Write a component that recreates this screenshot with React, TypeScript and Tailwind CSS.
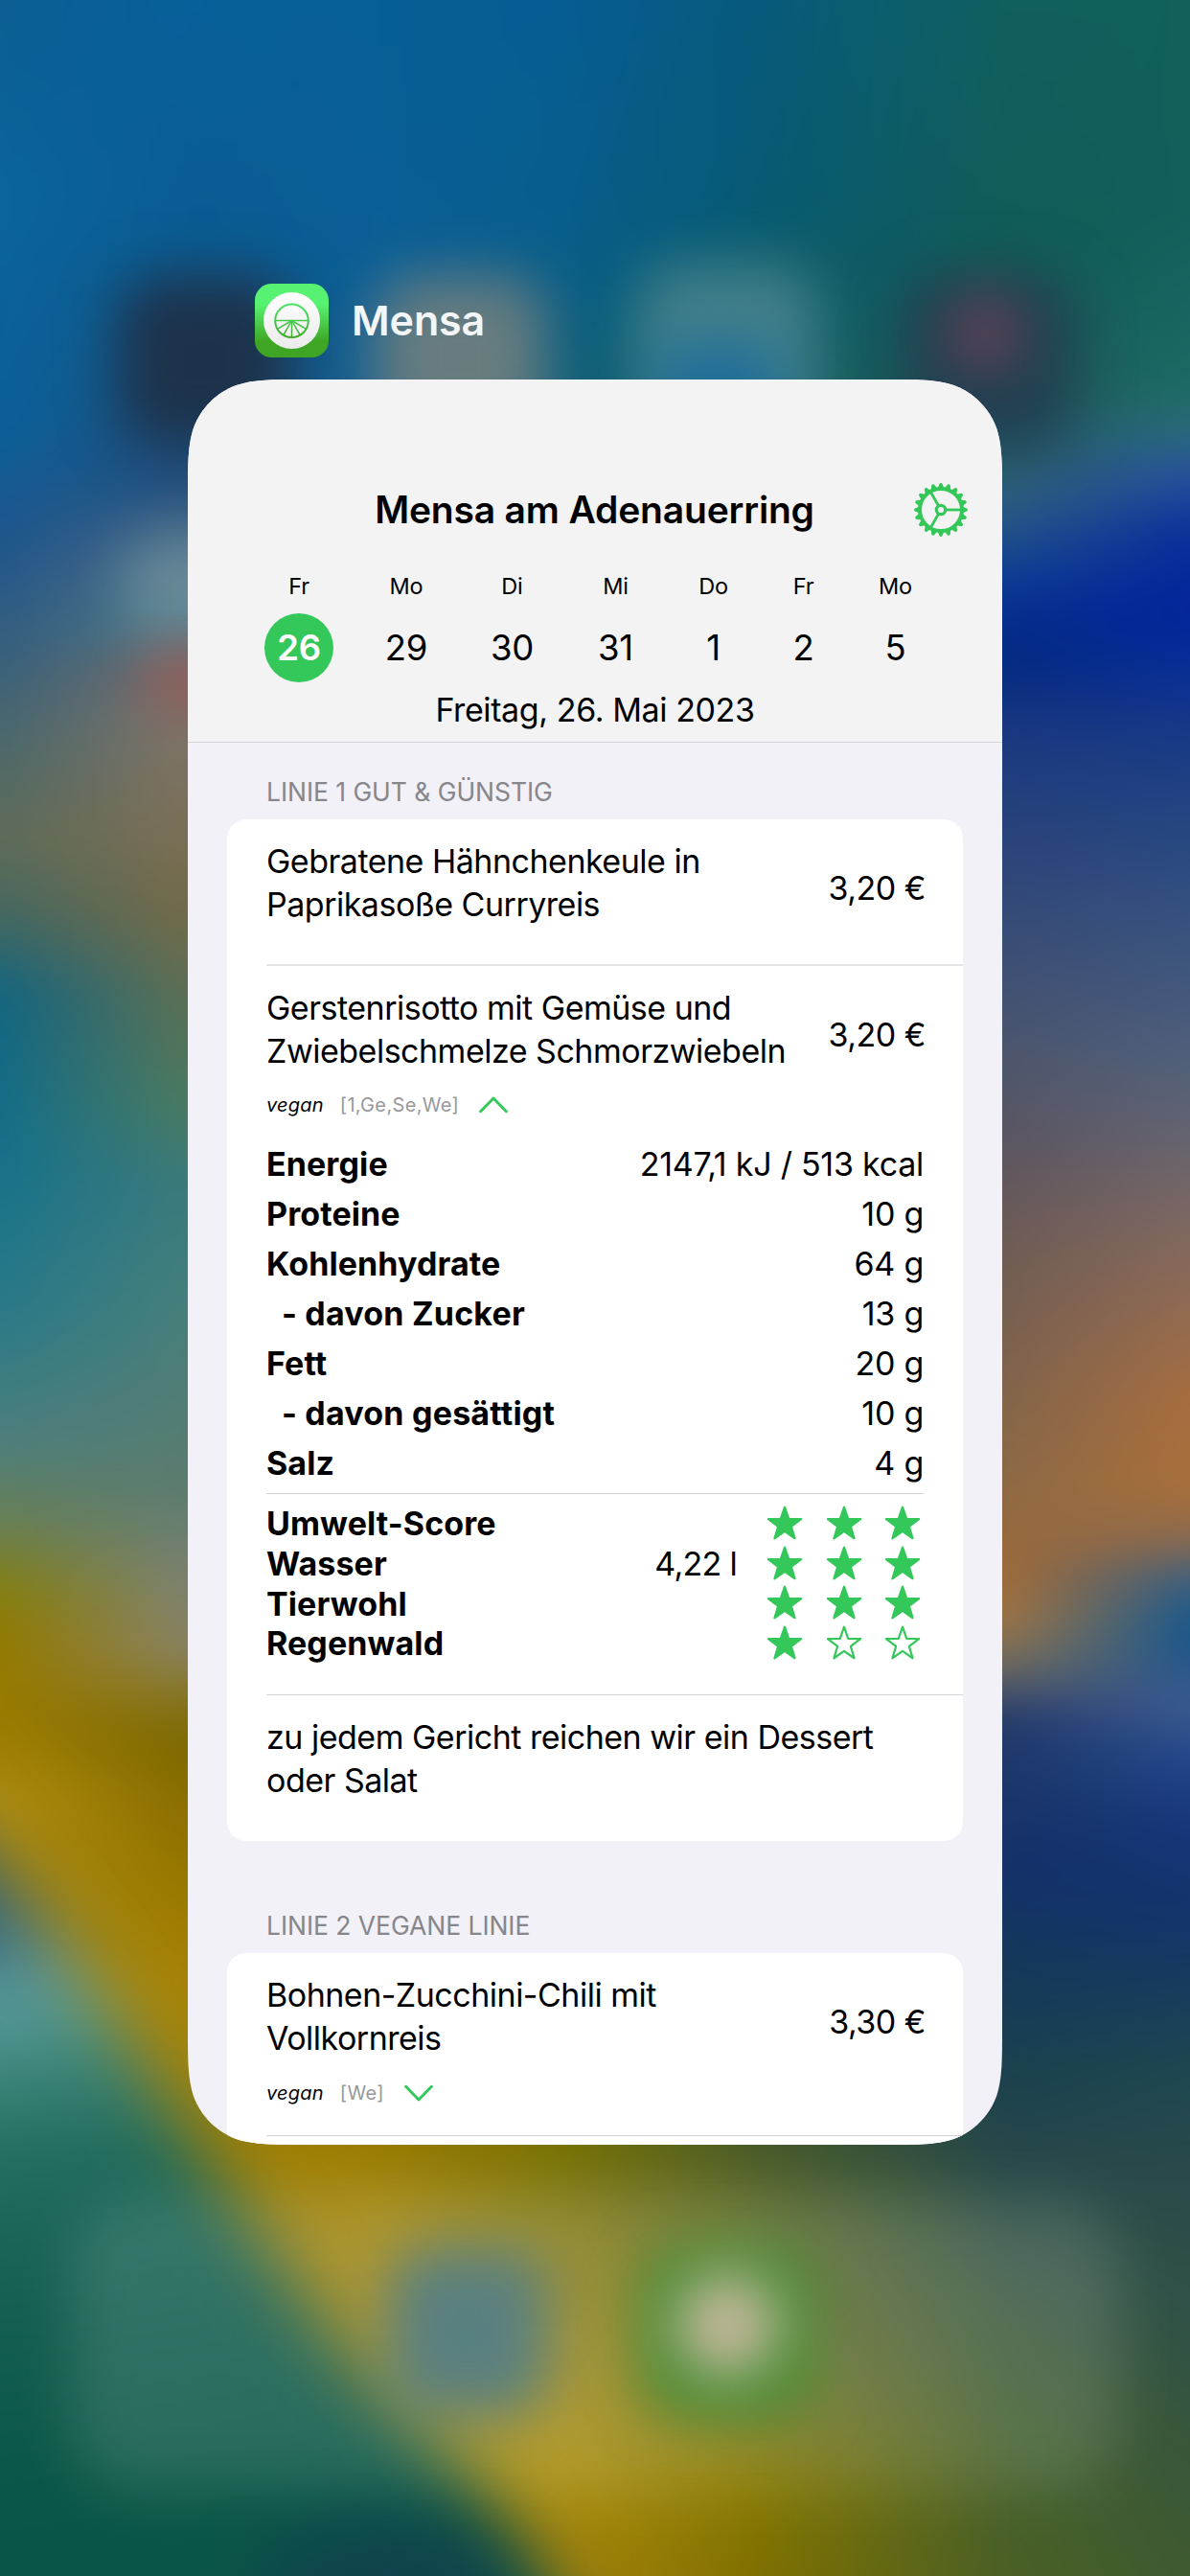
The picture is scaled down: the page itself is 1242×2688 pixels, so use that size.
import type { ReactNode } from 'react';

const GREEN = '#34c759';

/* ---------- Wallpaper ---------- */

type Stop = [number, string];

const COLUMNS: { x: number; stops: Stop[] }[] = [
  {
    x: 0,
    stops: [
      [0, '#0b5f93'], [120, '#0b659b'], [260, '#0a5f98'], [330, '#1f558c'], [400, '#37607c'], [450, '#4a686c'],
      [510, '#5f6c58'], [555, '#456860'], [605, '#126580'], [700, '#15708a'], [800, '#2a7a88'], [880, '#4f7f7c'],
      [930, '#6a7f50'], [968, '#857f10'], [1000, '#937a00'], [1050, '#9a7a00'], [1095, '#b08c10'], [1200, '#a88c18'],
      [1568, '#a88c18'],
    ],
  },
  {
    x: 113,
    stops: [
      [0, '#08609a'], [150, '#0a5c92'], [290, '#23507f'], [344, '#4f6d85'], [379, '#4f7a85'], [412, '#746e6c'],
      [443, '#807468'], [496, '#7d7059'], [554, '#756a48'], [613, '#5a7055'], [671, '#4a7a60'], [724, '#3a7a7d'],
      [788, '#457f7c'], [905, '#5b7c70'], [960, '#7b8272'], [1005, '#8a8260'], [1035, '#857420'], [1060, '#7c6800'],
      [1110, '#8f7000'], [1160, '#9c7a00'], [1210, '#a88408'], [1568, '#a5850a'],
    ],
  },
  {
    x: 240,
    stops: [[0, '#065f94'], [200, '#0c5f96'], [1300, '#967800'], [1340, '#a08612'], [1450, '#a48d1c'], [1568, '#a5870c']],
  },
  {
    x: 345,
    stops: [[0, '#065d93'], [150, '#085e8a'], [240, '#0f5f78'], [1300, '#757000'], [1340, '#807a18'], [1430, '#9a881c'], [1500, '#a88e10'], [1568, '#a5820c']],
  },
  {
    x: 460,
    stops: [[0, '#085a7c'], [120, '#085a74'], [240, '#105f60'], [1300, '#455828'], [1350, '#5f6c2c'], [1450, '#757628'], [1510, '#857800'], [1568, '#7f7000']],
  },
  {
    x: 611,
    stops: [
      [0, '#10605f'], [150, '#115c58'], [230, '#1c5a5a'], [286, '#2a6070'], [303, '#305f80'], [327, '#1f4f8a'],
      [355, '#0d3a95'], [379, '#052b8a'], [409, '#052b80'], [443, '#1a3780'], [496, '#26417c'], [584, '#3d4f75'],
      [642, '#4d566d'], [700, '#5d5660'], [759, '#6f5c55'], [905, '#8f6a45'], [957, '#a06a38'], [986, '#a07545'],
      [1016, '#6a6a60'], [1033, '#404a6a'], [1050, '#203a6a'], [1138, '#14306a'], [1197, '#15385a'], [1255, '#1a4050'],
      [1313, '#26484a'], [1400, '#3c5a42'], [1480, '#45602e'], [1568, '#4a6024'],
    ],
  },
  {
    x: 725,
    stops: [
      [0, '#11605a'], [130, '#11605a'], [235, '#1c6a64'], [262, '#2a6a78'], [286, '#2a549c'], [325, '#0a2f9a'],
      [370, '#03249a'], [400, '#062d98'], [450, '#183a84'], [550, '#33507f'], [650, '#52607a'], [750, '#806860'],
      [850, '#a66d40'], [905, '#a86f3a'], [938, '#8a6a50'], [962, '#3a5f80'], [990, '#16588c'], [1012, '#25568c'],
      [1040, '#3d5a90'], [1070, '#24478a'], [1110, '#163678'], [1160, '#14336e'], [1200, '#163a60'], [1260, '#1f4650'],
      [1320, '#284a4a'], [1400, '#2f5148'], [1500, '#38573a'], [1568, '#3f5a30'],
    ],
  },
];

function Wallpaper() {
  return (
    <svg className="absolute inset-0 h-full w-full" viewBox="0 0 725 1568" preserveAspectRatio="none" aria-hidden="true">
      <defs>
        {COLUMNS.map((c, i) => (
          <linearGradient key={c.x} id={`col${i}`} gradientUnits="userSpaceOnUse" x1="0" y1="0" x2="0" y2="1568">
            {c.stops.map(([y, color]) => (
              <stop key={y} offset={y / 1568} stopColor={color} />
            ))}
          </linearGradient>
        ))}
        {COLUMNS.slice(1).map((c, i) => (
          <linearGradient key={c.x} id={`ramp${i + 1}`} gradientUnits="userSpaceOnUse" x1={COLUMNS[i].x} y1="0" x2={c.x} y2="0">
            <stop offset="0" stopColor="#fff" stopOpacity="0" />
            <stop offset="1" stopColor="#fff" stopOpacity="1" />
          </linearGradient>
        ))}
        {COLUMNS.slice(1).map((c, i) => (
          <mask key={c.x} id={`mask${i + 1}`} maskUnits="userSpaceOnUse" x="-60" y="-60" width="845" height="1688">
            <rect x="-60" y="-60" width="845" height="1688" fill={`url(#ramp${i + 1})`} />
          </mask>
        ))}
        <linearGradient id="teal" gradientUnits="userSpaceOnUse" x1="0" y1="1140" x2="60" y2="1568">
          <stop offset="0" stopColor="#28586f" />
          <stop offset="0.07" stopColor="#2f6480" />
          <stop offset="0.17" stopColor="#60a0a0" />
          <stop offset="0.26" stopColor="#418a80" />
          <stop offset="0.38" stopColor="#246e60" />
          <stop offset="0.6" stopColor="#145f50" />
          <stop offset="0.85" stopColor="#0b5747" />
          <stop offset="1" stopColor="#0a5646" />
        </linearGradient>
        <filter id="b12" colorInterpolationFilters="sRGB" x="-80%" y="-80%" width="260%" height="260%"><feGaussianBlur stdDeviation="17" /></filter>
        <filter id="b20" colorInterpolationFilters="sRGB" x="-80%" y="-80%" width="260%" height="260%"><feGaussianBlur stdDeviation="22" /></filter>
        <filter id="soft" colorInterpolationFilters="sRGB" filterUnits="userSpaceOnUse" x="-60" y="-60" width="845" height="1688"><feGaussianBlur stdDeviation="10" /></filter>
      </defs>

      <g filter="url(#soft)">
        <rect x="-60" y="-60" width="845" height="1688" fill="url(#col0)" />
        {COLUMNS.slice(1).map((c, i) => (
          <rect key={c.x} x="-60" y="-60" width="845" height="1688" fill={`url(#col${i + 1})`} mask={`url(#mask${i + 1})`} />
        ))}
      </g>

      {/* lower left slope */}
      <path d="M-80 1055 L-20 1120 L35 1180 L92 1265 L150 1350 L212 1435 L282 1505 L350 1600 L350 1680 L-80 1680Z" fill="url(#teal)" filter="url(#b20)" />
      <ellipse cx="235" cy="1580" rx="80" ry="46" fill="#11404f" opacity="0.9" filter="url(#b20)" />

      {/* dock */}
      <rect x="42" y="1338" width="641" height="178" rx="44" fill="#ffffff" opacity="0.12" filter="url(#b12)" />
      <rect x="236" y="1368" width="98" height="102" rx="26" fill="#557f84" opacity="0.95" filter="url(#b12)" />
      <rect x="392" y="1368" width="102" height="102" rx="26" fill="#3f8c30" filter="url(#b12)" />
      <circle cx="443" cy="1415" r="33" fill="#c4b89c" filter="url(#b12)" />

      {/* home screen icons */}
      <rect x="72" y="168" width="106" height="104" rx="26" fill="#1d324a" filter="url(#b12)" />
      <rect x="228" y="168" width="104" height="100" rx="26" fill="#72807e" opacity="0.9" filter="url(#b12)" />
      <rect x="388" y="162" width="110" height="100" rx="26" fill="#4f8890" opacity="0.85" filter="url(#b12)" />
      <rect x="398" y="208" width="80" height="56" rx="20" fill="#186a9c" opacity="0.85" filter="url(#b12)" />
      <rect x="550" y="168" width="104" height="104" rx="26" fill="#213f52" filter="url(#b12)" />
      <circle cx="600" cy="203" r="22" fill="#7a4458" opacity="0.8" filter="url(#b12)" />
      <rect x="76" y="328" width="98" height="58" rx="20" fill="#7394a0" opacity="0.7" filter="url(#b12)" />
      <rect x="86" y="398" width="74" height="30" rx="15" fill="#a05650" opacity="0.85" filter="url(#b12)" />
    </svg>
  );
}

/* ---------- Icons ---------- */

function AppIcon() {
  const spokes = [0, 30, 60, 90, 120, 150, 180];
  return (
    <svg width="77" height="77" viewBox="0 0 77 77" aria-hidden="true">
      <defs>
        <linearGradient id="appBg" x1="0" y1="0" x2="0" y2="1">
          <stop offset="0.28" stopColor="#58f272" />
          <stop offset="0.78" stopColor="#3fa625" />
        </linearGradient>
        <linearGradient id="appDisc" x1="0" y1="0" x2="0" y2="1">
          <stop offset="0" stopColor="#ffffff" />
          <stop offset="1" stopColor="#ebebeb" />
        </linearGradient>
        <linearGradient id="appWheel" gradientUnits="userSpaceOnUse" x1="0" y1="20" x2="0" y2="57">
          <stop offset="0.1" stopColor="#4de26a" />
          <stop offset="1" stopColor="#3fa82a" />
        </linearGradient>
      </defs>
      <rect width="77" height="77" rx="17.5" fill="url(#appBg)" />
      <circle cx="38.5" cy="38.5" r="29.5" fill="url(#appDisc)" />
      <g fill="none" stroke="url(#appWheel)">
        <circle cx="38.5" cy="38.8" r="17.3" strokeWidth="2" />
        {spokes.map((a) => {
          const t = (a * Math.PI) / 180;
          return (
            <path key={a} strokeWidth="1.5" d={`M38.5 38.5L${38.5 + 17 * Math.cos(t)} ${38.6 + 17 * Math.sin(t)}`} />
          );
        })}
      </g>
    </svg>
  );
}

function GearIcon() {
  const teeth = Array.from({ length: 20 }, (_, i) => i * 18);
  return (
    <svg width="58" height="58" viewBox="-29 -29 58 58" fill="none" stroke={GREEN} aria-hidden="true">
      <circle r="22" strokeWidth="4" />
      <circle r="4.7" strokeWidth="3.2" />
      {[0, 120, 240].map((a) => (
        <path key={a} d="M5.5 0H21" strokeWidth="2.8" transform={`rotate(${a})`} />
      ))}
      {teeth.map((a) => (
        <path key={a} d="M23 -2.7L27.4 -0.8V0.8L23 2.7Z" fill={GREEN} strokeWidth="1" strokeLinejoin="round" transform={`rotate(${a})`} />
      ))}
    </svg>
  );
}

function Chevron({ up }: { up?: boolean }) {
  return (
    <svg width="30" height="18" viewBox="0 0 30 18" fill="none" stroke={GREEN} strokeWidth="2.9" strokeLinecap="round" strokeLinejoin="round" aria-hidden="true">
      <path d={up ? 'M1.6 15.8L15 2L28.4 15.8' : 'M1.6 2.2L15 16L28.4 2.2'} />
    </svg>
  );
}

function starPath(outer: number, inner: number) {
  const pts = Array.from({ length: 10 }, (_, i) => {
    const r = i % 2 ? inner : outer;
    const t = (Math.PI / 5) * i - Math.PI / 2;
    return `${(r * Math.cos(t)).toFixed(2)} ${(r * Math.sin(t)).toFixed(2)}`;
  });
  return `M${pts.join('L')}Z`;
}

const STAR = starPath(18, 7.2);

function Star({ filled }: { filled: boolean }) {
  return (
    <svg width="38" height="38" viewBox="-19 -19.7 38 38" aria-hidden="true">
      <path d={STAR} fill={filled ? GREEN : 'none'} stroke={GREEN} strokeWidth="2.2" strokeLinejoin="round" />
    </svg>
  );
}

/* ---------- Header ---------- */

const DAYS = [
  { day: 'Fr', date: '26', gap: '' },
  { day: 'Mo', date: '29', gap: 'ml-10' },
  { day: 'Di', date: '30', gap: 'ml-[38.5px]' },
  { day: 'Mi', date: '31', gap: 'ml-9' },
  { day: 'Do', date: '1', gap: 'ml-[30px]' },
  { day: 'Fr', date: '2', gap: 'ml-[22px]' },
  { day: 'Mo', date: '5', gap: 'ml-6' },
];

function Header() {
  return (
    <header className="h-[379px] border-b border-[#d5d5d8] bg-[#f3f3f3] pt-[107px]">
      <div className="grid h-[58px] grid-cols-[1fr_auto_1fr] items-center pr-[35px]">
        <span />
        <h1 className="translate-x-[17px] text-[39px] font-semibold tracking-[-0.18px]">Mensa am Adenauerring</h1>
        <button className="justify-self-end">
          <GearIcon />
        </button>
      </div>
      <div className="mt-[33px] flex pl-[80px]">
        {DAYS.map((d, i) => (
          <div key={i} className={`flex w-[72px] flex-col items-center ${d.gap}`}>
            <span className="h-9 text-[23.5px] leading-9 tracking-[-0.2px]">{d.day}</span>
            <span
              className={
                i === 0
                  ? 'mt-[10px] h-[72px] w-[72px] rounded-full bg-[#34c759] text-center text-[36.5px] leading-[72px] font-semibold tracking-[-0.2px] text-white'
                  : 'mt-[10px] h-[72px] text-[36.5px] leading-[72px] tracking-[-0.2px]'
              }
            >
              {d.date}
            </span>
          </div>
        ))}
      </div>
      <p className="mt-[6px] text-center leading-[45px] tracking-[-0.4px]">Freitag, 26. Mai 2023</p>
    </header>
  );
}

/* ---------- Menu ---------- */

function Dish({ name, price }: { name: string[]; price: string }) {
  return (
    <div className="flex items-center justify-between">
      <p className="leading-[45px]">
        {name.map((line) => (
          <span key={line} className="block whitespace-nowrap">{line}</span>
        ))}
      </p>
      <span className="mt-[11px] -mr-[2px]">{price}</span>
    </div>
  );
}

function Tags({ additives, open }: { additives: string; open?: boolean }) {
  return (
    <div className="flex h-7 items-center text-[20px]">
      <span className="tracking-[0.2px] italic">vegan</span>
      <span className="ml-[17px] tracking-[0.35px] text-[#98989c]">{additives}</span>
      <span className="ml-[21px]">
        <Chevron up={open} />
      </span>
    </div>
  );
}

const NUTRITION = [
  { label: 'Energie', value: '2147,1 kJ / 513 kcal' },
  { label: 'Proteine', value: '10 g' },
  { label: 'Kohlenhydrate', value: '64 g' },
  { label: '- davon Zucker', value: '13 g', sub: true },
  { label: 'Fett', value: '20 g' },
  { label: '- davon gesättigt', value: '10 g', sub: true },
  { label: 'Salz', value: '4 g' },
];

const SCORES = [
  { label: 'Umwelt-Score', stars: 3 },
  { label: 'Wasser', stars: 3, value: '4,22 l' },
  { label: 'Tierwohl', stars: 3 },
  { label: 'Regenwald', stars: 1 },
];

function SectionTitle({ children }: { children: ReactNode }) {
  return <h2 className="pl-[41px] text-[26.5px] leading-8 tracking-[-0.05px] text-[#86868b]">{children}</h2>;
}

function MenuList() {
  return (
    <main className="px-[41px] pt-[35px]">
      <SectionTitle>LINIE 1 GUT &amp; GÜNSTIG</SectionTitle>
      <section className="mt-[13px] h-[1066px] rounded-[20px] bg-white pl-[41px]">
        <div className="h-[153px] border-b-2 border-[#e4e4e6] pt-[21px] pr-[41px]">
          <Dish name={['Gebratene Hähnchenkeule in', 'Paprikasoße Curryreis']} price="3,20 €" />
        </div>
        <div className="h-[761px] border-b border-[#d3d3d6] pt-[21px]">
          <div className="pr-[41px]">
            <Dish name={['Gerstenrisotto mit Gemüse und', 'Zwiebelschmelze Schmorzwiebeln']} price="3,20 €" />
            <div className="mt-5">
              <Tags additives="[1,Ge,Se,We]" open />
            </div>
            <dl className="mt-[21px]">
              {NUTRITION.map((n) => (
                <div key={n.label} className="flex h-[52px] items-center justify-between">
                  <dt className={n.sub ? 'pl-4 font-bold tracking-[0.2px]' : 'font-bold tracking-[0.1px]'}>{n.label}</dt>
                  <dd className="tracking-[-0.25px]">{n.value}</dd>
                </div>
              ))}
            </dl>
            <div className="mt-[6px] border-t border-[#d3d3d6] pt-[10px]">
              {SCORES.map((s) => (
                <div key={s.label} className="flex h-[41.7px] items-center">
                  <span className="flex-1 font-bold tracking-[0.1px]">{s.label}</span>
                  {s.value && <span className="mr-[31px] tracking-[-0.7px]">{s.value}</span>}
                  <span className="mr-[3px] flex gap-[23.5px]">
                    {[0, 1, 2].map((i) => (
                      <Star key={i} filled={i < s.stars} />
                    ))}
                  </span>
                </div>
              ))}
            </div>
          </div>
        </div>
        <div className="pt-[21px] leading-[45px]">
          <p>zu jedem Gericht reichen wir ein Dessert</p>
          <p>oder Salat</p>
        </div>
      </section>

      <div className="mt-[72px]">
        <SectionTitle>LINIE 2 VEGANE LINIE</SectionTitle>
      </div>
      <section className="mt-[13px] h-[300px] rounded-[20px] bg-white pl-[41px]">
        <div className="h-[191px] border-b border-[#d3d3d6] pt-[21px]">
          <div className="pr-[41px]">
            <Dish name={['Bohnen-Zucchini-Chili mit', 'Vollkornreis']} price="3,30 €" />
            <div className="mt-[21px]">
              <Tags additives="[We]" />
            </div>
          </div>
        </div>
      </section>
    </main>
  );
}

export default function App() {
  return (
    <div className="relative h-[2688px] w-[1242px] overflow-hidden font-['Inter','Liberation_Sans',sans-serif] text-black">
      <Wallpaper />
      <div className="relative pt-[296px] pl-[196px]">
        <div className="flex h-[77px] items-center gap-[24px] pl-[70px]">
          <AppIcon />
          <span className="text-[43px] font-[560] tracking-[-0.1px] text-[#f3f5f7]">Mensa</span>
        </div>
        <div className="mt-[23px] h-[1842px] w-[850px] overflow-hidden bg-[#f2f1f7] text-[34px] tracking-[-0.5px] [clip-path:path('M122_0H728C763_0_781_0_799.5_6C820_13.5_836.5_30_844_50.5C850_69.5_850_87_850_122V1720C850_1755_850_1772.5_844_1791.5C836.5_1812_820_1828.5_799.5_1836C781_1842_763_1842_728_1842H122C87_1842_69.5_1842_50.5_1836C30_1828.5_13.5_1812_6_1791.5C0_1772.5_0_1755_0_1720V122C0_87_0_69.5_6_50.5C13.5_30_30_13.5_50.5_6C69.5_0_87_0_122_0Z')]">
          <Header />
          <MenuList />
        </div>
      </div>
    </div>
  );
}
